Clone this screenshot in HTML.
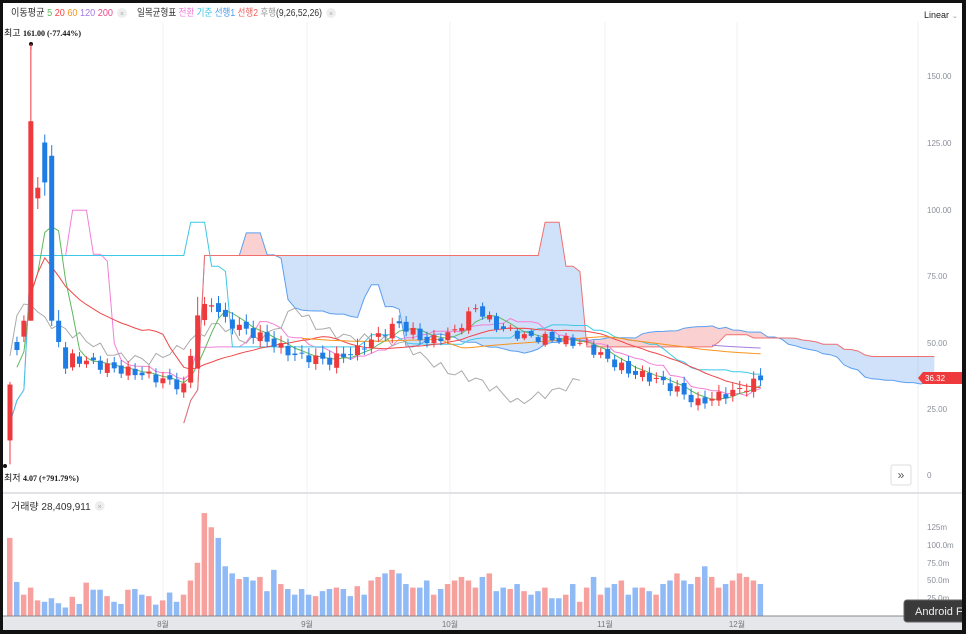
<!DOCTYPE html><html><head><meta charset="utf-8"><style>
body{margin:0;background:#111;width:966px;height:634px;overflow:hidden;font-family:"Liberation Sans","Noto Sans CJK KR",sans-serif}
#w{position:absolute;left:3px;top:3px;width:959px;height:627px;background:#fff;overflow:hidden}
svg{position:absolute;left:-3px;top:-3px}
</style></head><body><div id="w"><svg id="s" width="966" height="634" viewBox="0 0 966 634"></svg></div>
<script>
const N=109,X=i=>10+6.95*i,Y=p=>475-p*2.66,VY=v=>616-v*0.71;
const kp=[[9,44],[12,42],[15,40],[19,38],[23,35],[25,33],[26,45],[27,60],[29,65],[31,58],[36,52],[41,45],[46,43],[50,47],[54,54],[56,57],[60,50],[64,54],[67,63],[70,56],[74,52],[79,51],[83,49],[85,45],[89,39],[93,36],[96,32],[99,27],[101,29],[105,32],[108,36]];
let o=[],c=[],h=[],l=[];
const first=[[13,34,35,4],[50,47,52,45],[52,58,60,50],[58,133,161,58],[104,108,112,100],[125,110,128,105],[120,58,124,56],[58,50,62,48],[48,40,50,38]];
first.forEach((a,i)=>{o[i]=a[0];c[i]=a[1];h[i]=a[2];l[i]=a[3]});
for(let i=9;i<N;i++){let k=0;while(k<kp.length-1&&kp[k+1][0]<i)k++;let a=kp[k],b=kp[Math.min(k+1,kp.length-1)];let t=b[0]==a[0]?0:(i-a[0])/(b[0]-a[0]);let p=a[1]+(b[1]-a[1])*t+Math.sin(i*2.3)*1.8;c[i]=p;o[i]=c[i-1]+Math.sin(i*1.7)*1.2;let m=Math.abs(Math.sin(i*3.1))*2+0.8;h[i]=Math.max(o[i],c[i])+m;l[i]=Math.min(o[i],c[i])-m*0.8;}
o[27]=40;c[27]=60;h[27]=67;l[27]=40;
const vol=[110,48,30,40,22,20,25,18,12,27,17,47,37,37,28,20,17,37,38,30,28,16,22,33,20,30,50,75,145,125,110,70,60,52,55,50,55,35,65,45,38,30,38,30,28,35,38,40,38,28,42,30,50,55,60,65,60,45,40,40,50,30,38,45,50,55,50,40,55,60,35,40,38,45,35,30,35,40,25,25,30,45,20,40,55,30,40,45,50,30,40,40,35,30,45,50,60,50,45,55,70,55,40,45,50,60,55,50,45];
let g='';
const R='#ef3a3d',B='#1f7ce4';
[163,307,450,605,737].forEach(x=>g+=`<line x1="${x}" y1="22" x2="${x}" y2="616" stroke="#f0f0f0"/>`);
g+=`<line x1="918" y1="22" x2="918" y2="616" stroke="#eee"/><line x1="0" y1="493" x2="966" y2="493" stroke="#e2e2e6" stroke-width="2"/>`;
const mx=(a,s,e)=>Math.max(...a.slice(Math.max(0,s),e+1)),mn=(a,s,e)=>Math.min(...a.slice(Math.max(0,s),e+1));
let ten=[],kij=[],A=[],Bs=[];
for(let i=0;i<N;i++){ten[i]=(mx(h,i-8,i)+mn(l,i-8,i))/2;kij[i]=(mx(h,i-25,i)+mn(l,i-25,i))/2;A[i+25]=(ten[i]+kij[i])/2;Bs[i+25]=(mx(h,i-51,i)+mn(l,i-51,i))/2;}
for(let i=25;i<N+25;i++){if(A[i+1]===undefined)break;let col=Bs[i]>A[i]?'rgba(120,170,240,.35)':'rgba(240,120,120,.35)';g+=`<polygon points="${X(i)},${Y(A[i])} ${X(i+1)},${Y(A[i+1])} ${X(i+1)},${Y(Bs[i+1])} ${X(i)},${Y(Bs[i])}" fill="${col}"/>`;}
const pl=(arr,s,e,col)=>{let p=[];for(let i=s;i<=e;i++)if(arr[i]!==undefined)p.push(X(i).toFixed(1)+','+Y(arr[i]).toFixed(1));g+=`<polyline points="${p.join(' ')}" fill="none" stroke="${col}" stroke-width="1"/>`};
pl(A,25,N+25,'#5b9ff0');pl(Bs,25,N+25,'#f07070');pl(ten,0,N-1,'#f27fd8');pl(kij,0,N-1,'#3cc8e6');
let ch=[];for(let i=26;i<N;i++)ch[i-26]=c[i];pl(ch,0,N-27,'#aaa');
const ma=(n,s)=>{let r=[];for(let i=s;i<N;i++){let a=c.slice(Math.max(0,i-n+1),i+1);r[i]=a.reduce((x,y)=>x+y)/a.length}return r};
pl(ma(5,1),1,N-1,'#5cb85c');pl(ma(20,3),3,N-1,'#f04848');pl(ma(60,42),42,N-1,'#f7941d');pl(ma(120,101),101,N-1,'#a67ce0');
for(let i=0;i<N;i++){let up=c[i]>=o[i],col=up?R:B,x=X(i);g+=`<line x1="${x}" y1="${Y(h[i])}" x2="${x}" y2="${Y(l[i])}" stroke="${col}"/>`;let t=Y(Math.max(o[i],c[i])),b=Y(Math.min(o[i],c[i]));g+=`<rect x="${x-2.5}" y="${t}" width="5" height="${Math.max(1,b-t)}" fill="${col}"/>`;
let v=vol[i]||35;g+=`<rect x="${x-3}" y="${VY(v)}" width="5.5" height="${616-VY(v)}" fill="${up?'#f7a19f':'#8fbaf5'}"/>`;}
[[150,76],[125,143],[100,210],[75,276],[50,343],[25,409],[0,475]].forEach(a=>g+=`<text x="927" y="${a[1]+3}" font-size="8" fill="#8a8f99">${a[0]?a[0].toFixed(2):0}</text>`);
['125m',527,'100.0m',545,'75.0m',563,'50.0m',580,'25.0m',598].forEach((t,k,arr)=>{if(k%2==0)g+=`<text x="927" y="${arr[k+1]+3}" font-size="8" fill="#8a8f99">${t}</text>`});
g+=`<rect x="0" y="616" width="966" height="14" fill="#e6e7ea"/><line x1="0" y1="616" x2="918" y2="616" stroke="#888"/>`;
[['8월',163],['9월',307],['10월',450],['11월',605],['12월',737]].forEach(a=>g+=`<text x="${a[1]}" y="627" font-size="8" fill="#777" text-anchor="middle">${a[0]}</text>`);
g+=`<polygon points="918,378 923,372 962,372 962,384 923,384" fill="#ef3a3d"/><text x="925" y="381" font-size="8" fill="#fff">36.32</text>`;
g+=`<rect x="891" y="465" width="20" height="20" rx="2" fill="#fff" stroke="#ddd"/><text x="901" y="479" font-size="12" fill="#555" text-anchor="middle">»</text>`;
g+=`<text x="924" y="18" font-size="9" fill="#222">Linear</text><text x="952" y="18" font-size="7" fill="#999">⌄</text>`;
g+=`<text x="4" y="36" font-size="9" fill="#111">최고</text><text x="23" y="36" font-size="8" font-weight="bold" font-family="Liberation Serif" fill="#111">161.00 (-77.44%)</text><circle cx="31" cy="44" r="2" fill="#111"/><line x1="31" y1="44" x2="31" y2="50" stroke="#ef3a3d"/>`;
g+=`<text x="4" y="481" font-size="9" fill="#111">최저</text><text x="23" y="481" font-size="8" font-weight="bold" font-family="Liberation Serif" fill="#111">4.07 (+791.79%)</text><circle cx="5" cy="466" r="2" fill="#111"/>`;
const leg=[['이동평균 ','#333'],['5 ','#5cb85c'],['20 ','#f04848'],['60 ','#f7941d'],['120 ','#a67ce0'],['200','#e84a8a']];
g+=`<text id="l1" x="11" y="16" font-size="10" textLength="102" lengthAdjust="spacingAndGlyphs">`+leg.map(a=>`<tspan fill="${a[1]}">${a[0]}</tspan>`).join('')+`</text><g id="x1"><circle cx="0" cy="13" r="5" fill="#eee"/><text x="0" y="16" font-size="7" fill="#aaa" text-anchor="middle">×</text></g>`;
const leg2=[['일목균형표 ','#333'],['전환 ','#f27fd8'],['기준 ','#3cc8e6'],['선행1 ','#4a9af0'],['선행2 ','#f06060'],['후행','#999'],['(9,26,52,26)','#333']];
g+=`<text id="l2" x="137" y="16" font-size="10" textLength="185" lengthAdjust="spacingAndGlyphs">`+leg2.map(a=>`<tspan fill="${a[1]}">${a[0]}</tspan>`).join('')+`</text><g id="x2"><circle cx="0" cy="13" r="5" fill="#eee"/><text x="0" y="16" font-size="7" fill="#aaa" text-anchor="middle">×</text></g>`;
g+=`<text id="l3" x="11" y="510" font-size="10" fill="#333">거래량 28,409,911</text><g id="x3"><circle cx="0" cy="506" r="5" fill="#eee"/><text x="0" y="509" font-size="7" fill="#aaa" text-anchor="middle">×</text></g>`;
g+=`<rect x="904" y="600" width="66" height="22" rx="3" fill="#3a3a3a" stroke="#666"/><text x="915" y="615" font-size="11" fill="#eee">Android Fi</text>`;
document.getElementById('s').innerHTML=g;
[['l1','x1',11,102],['l2','x2',137,185],['l3','x3',11,0]].forEach(a=>{let w=a[3]||document.getElementById(a[0]).getComputedTextLength();document.getElementById(a[1]).setAttribute('transform',`translate(${a[2]+w+9},0)`)});
</script></body></html>
